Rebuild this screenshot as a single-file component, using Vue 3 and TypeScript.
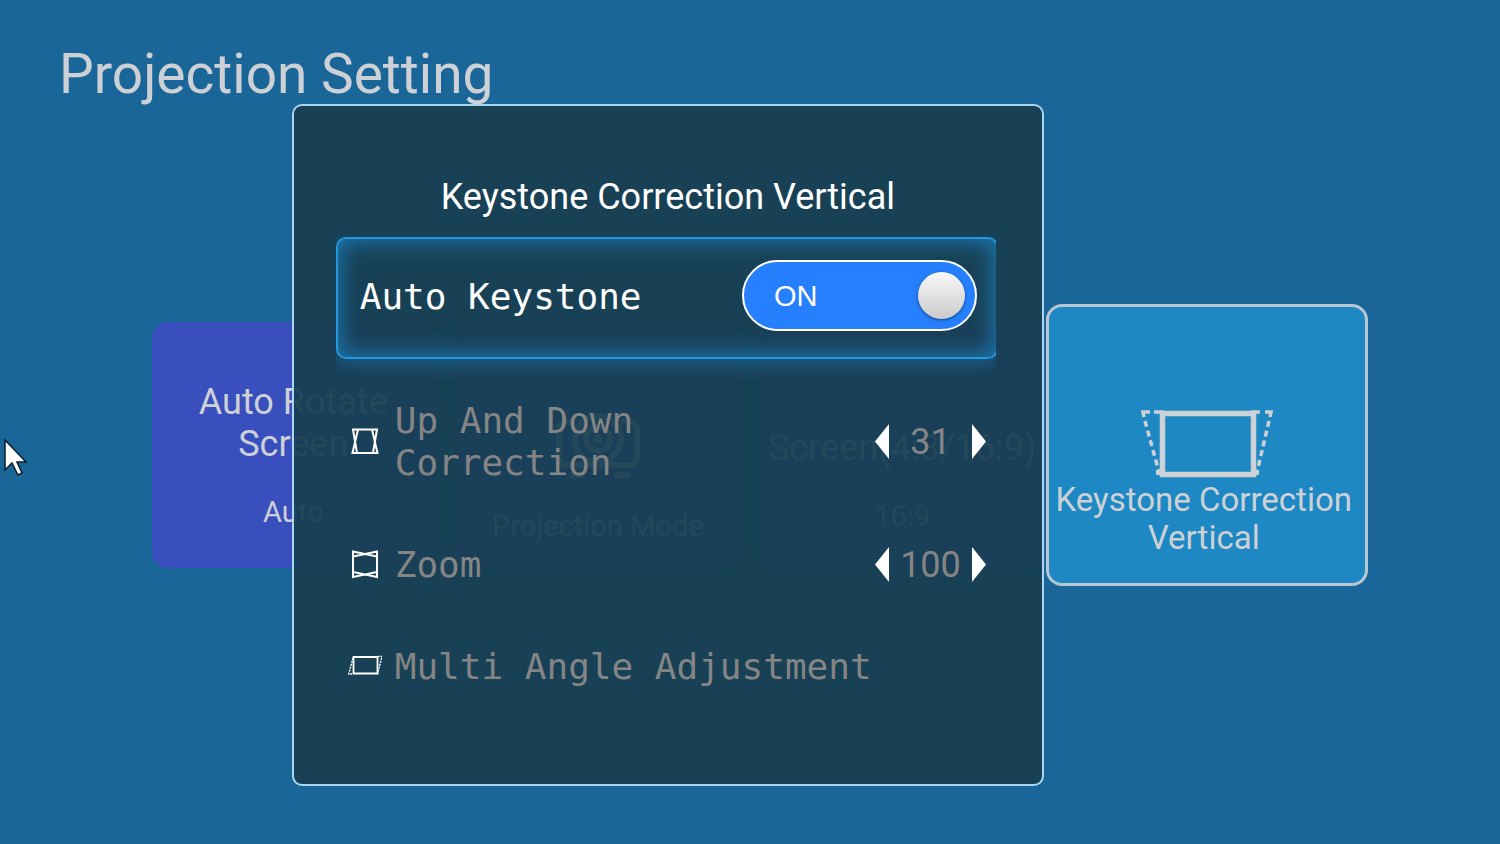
<script setup lang="ts">
import { reactive, ref } from 'vue'

interface Correction {
  id: 'vertical' | 'zoom'
  label: string
  value: number
}

const autoKeystone = ref(true)
const corrections = reactive<Correction[]>([
  { id: 'vertical', label: 'Up And Down Correction', value: 31 },
  { id: 'zoom', label: 'Zoom', value: 100 },
])

function step(item: Correction, delta: number) {
  item.value = Math.min(100, Math.max(0, item.value + delta))
}
</script>

<template>
  <div class="screen">
    <h1 class="heading">Projection Setting</h1>

    <main class="tiles">
      <button type="button" class="tile rotate">
        <span class="tile-label">Auto Rotate Screen</span>
        <span class="tile-value">Auto</span>
      </button>
      <button type="button" class="tile mode">
        <svg class="projector" viewBox="0 0 84 68" aria-hidden="true">
          <g fill="none" stroke="currentColor" stroke-width="6">
            <path d="M19 11H10Q3 11 3 18V47Q3 54 10 54H74Q81 54 81 47V18Q81 11 74 11H65" />
            <circle cx="42" cy="28" r="23" />
            <circle cx="42" cy="28" r="12" />
            <path d="M14 64H28M58 64H74" />
          </g>
          <circle cx="42" cy="28" r="5" fill="currentColor" />
        </svg>
        <span class="tile-value">Projection Mode</span>
      </button>
      <button type="button" class="tile ratio">
        <span class="tile-label">Screen(4:3/16:9)</span>
        <span class="tile-value">16:9</span>
      </button>
      <button type="button" class="tile focused">
        <svg class="keystone" viewBox="0 0 134 70" aria-hidden="true">
          <g fill="none" stroke="currentColor">
            <path d="M22.500 4.500H113.500V65.500H22.500Z" stroke-width="5.500" />
            <path d="M14 3H24M111 3H120" stroke-width="3.500" />
            <path d="M10 3H3L4 8M125 3H131L130 8" stroke-width="3.500" />
            <path d="M5 12L19 63M129 12L117 63" stroke-width="3.500" stroke-dasharray="6 4" />
            <path d="M18 61V66M117 61V66" stroke-width="4" />
          </g>
        </svg>
        <span class="tile-label">Keystone Correction Vertical</span>
      </button>
    </main>

    <section class="dialog" role="dialog" aria-labelledby="dialog-title">
      <h2 id="dialog-title" class="dialog-title">Keystone Correction Vertical</h2>
      <div class="options">
        <label class="auto">
          <span class="auto-label">Auto Keystone</span>
          <span class="switch" :class="{ off: !autoKeystone }">
            <input v-model="autoKeystone" type="checkbox" role="switch" />
            <span class="state">{{ autoKeystone ? 'ON' : 'OFF' }}</span>
            <span class="knob"></span>
          </span>
        </label>

        <div v-for="item in corrections" :key="item.id" class="option">
          <svg class="icon" viewBox="0 0 34 34" aria-hidden="true">
            <g fill="none" stroke="currentColor" stroke-width="2">
              <path v-if="item.id === 'vertical'" d="M5 4.500H29L25 28H9ZM10 4.500H24L29.500 28H4.500Z" />
              <path v-else d="M5 3.500L29 8.500V24L5 29ZM29 3.500L5 8.500V24L29 29Z" />
            </g>
          </svg>
          <span :id="`${item.id}-label`" class="option-label">{{ item.label }}</span>
          <span class="stepper" role="group" :aria-labelledby="`${item.id}-label`">
            <button type="button" aria-label="Decrease" @click="step(item, -1)">
              <svg viewBox="0 0 14 36" aria-hidden="true"><path d="M14 0V35L0 17.500Z" fill="currentColor" /></svg>
            </button>
            <output>{{ item.value }}</output>
            <button type="button" aria-label="Increase" @click="step(item, 1)">
              <svg viewBox="0 0 14 36" aria-hidden="true"><path d="M0 0V35L14 17.500Z" fill="currentColor" /></svg>
            </button>
          </span>
        </div>

        <button type="button" class="option">
          <svg class="icon" viewBox="0 0 34 34" aria-hidden="true">
            <g fill="none" stroke="currentColor">
              <path d="M5.500 7H29.500V23.500H5.500Z" stroke-width="1.800" />
              <path d="M5 8L0.700 24H5M29.500 6.500H34L29.500 24" stroke-width="1.400" stroke-dasharray="2 1" />
            </g>
          </svg>
          <span class="option-label">Multi Angle Adjustment</span>
        </button>
      </div>
    </section>

    <svg class="pointer" viewBox="0 0 24 38" aria-hidden="true">
      <path d="M1 1V31L8 24L14 36L18 34L13 23H22Z" fill="#fff" stroke="#0c1c2c" stroke-width="1.500" />
    </svg>
  </div>
</template>

<style>
body {
  background: #1a6698;
}
</style>

<style scoped>
.screen {
  position: relative;
  box-sizing: border-box;
  min-height: 100vh;
  padding-top: 42px;
  overflow: hidden;
  background: #1a6698;
  color: #cdd1d6;
  font-family: Roboto, sans-serif;
}

button {
  padding: 0;
  border: 0;
  background: none;
  color: inherit;
  font: inherit;
  cursor: pointer;
}

.heading {
  margin: 0;
  padding-left: 59px;
  font-size: 55px;
  font-weight: 400;
  line-height: 64px;
}

.tiles {
  display: grid;
  grid-template-columns: repeat(4, minmax(0, 1fr));
  gap: 22px;
  margin: 216px 152px 0;
}

.tile {
  display: flex;
  flex-direction: column;
  align-items: center;
  justify-content: flex-end;
  gap: 30px;
  box-sizing: border-box;
  min-height: 246px;
  padding: 0 6px 38px;
  border-radius: 16px;
  background: #394fbd;
}

.tile-label {
  max-width: 100%;
  font-size: 36px;
  line-height: 42px;
}

.tile-value {
  font-size: 29px;
  line-height: 34px;
  white-space: nowrap;
}

.projector {
  width: 84px;
  height: 68px;
}

.tile.rotate {
  padding: 0 20px 39px;
}

.tile.mode {
  padding-bottom: 25px;
}

.tile.ratio {
  padding-bottom: 35px;
}

.tile.focused {
  gap: 2px;
  margin: -18px -20px;
  padding: 0 4px 26px;
  border: 3px solid #b9c7d3;
  background: #1d88c3;
}

.focused .tile-label {
  padding-right: 6px;
  font-size: 33px;
  line-height: 38px;
}

.keystone {
  width: 134px;
  height: 70px;
}

.dialog {
  position: absolute;
  top: 104px;
  left: 19.45%;
  box-sizing: border-box;
  width: 50.15%;
  min-height: 682px;
  padding: 70px 42px 66px;
  border: 2px solid #a9d6f0;
  border-radius: 10px;
  background: rgba(24, 63, 82, 0.94);
}

.dialog-title {
  margin: 0 0 19px;
  color: #fff;
  font-size: 36px;
  font-weight: 400;
  line-height: 42px;
  text-align: center;
}

.options {
  margin-right: 4px;
  overflow: hidden;
  color: #858585;
  font-family: "DejaVu Sans Mono", monospace;
  font-size: 36px;
  line-height: 42px;
}

.auto {
  display: flex;
  align-items: center;
  justify-content: space-between;
  box-sizing: border-box;
  min-height: 122px;
  margin: 0 -2px 11px 0;
  padding: 0 19px 6px 22px;
  border: 2px solid #2597df;
  border-radius: 10px;
  box-shadow: inset 0 0 22px 2px #1b7ab5, 0 4px 18px rgba(27, 122, 181, 0.6);
  color: #fff;
}

.auto-label {
  padding-top: 4px;
}

.switch {
  position: relative;
  display: flex;
  align-items: center;
  justify-content: space-between;
  box-sizing: border-box;
  width: 235px;
  height: 71px;
  padding: 0 10px 0 30px;
  border: 2px solid #fff;
  border-radius: 36px;
  background: #267ffc;
}

.switch input {
  position: absolute;
  inset: 0;
  margin: 0;
  appearance: none;
  cursor: pointer;
}

.switch.off {
  background: #5b6a76;
}

.state {
  padding-top: 2px;
  font-family: "Liberation Sans", Arial, sans-serif;
  font-size: 29px;
}

.knob {
  width: 47px;
  height: 47px;
  border-radius: 50%;
  background: linear-gradient(#f8f8f8, #cbcbcb);
  box-shadow: 0 1px 3px rgba(0, 0, 0, 0.5);
}

.option {
  display: flex;
  align-items: center;
  box-sizing: border-box;
  width: 100%;
  padding: 30px 10px 30px 12px;
  text-align: left;
}

.icon {
  flex: none;
  width: 34px;
  height: 34px;
  margin-right: 13px;
  color: #fff;
}

.option-label {
  flex: 1;
}

.stepper {
  display: flex;
  align-items: center;
  justify-content: space-between;
  width: 111px;
  margin-left: 16px;
  font-family: Roboto, sans-serif;
}

.stepper button {
  width: 14px;
  height: 36px;
  color: #fff;
}

.stepper svg {
  display: block;
  width: 14px;
  height: 36px;
}

.pointer {
  position: absolute;
  top: 439px;
  left: 4px;
  width: 24px;
  height: 38px;
}
</style>
